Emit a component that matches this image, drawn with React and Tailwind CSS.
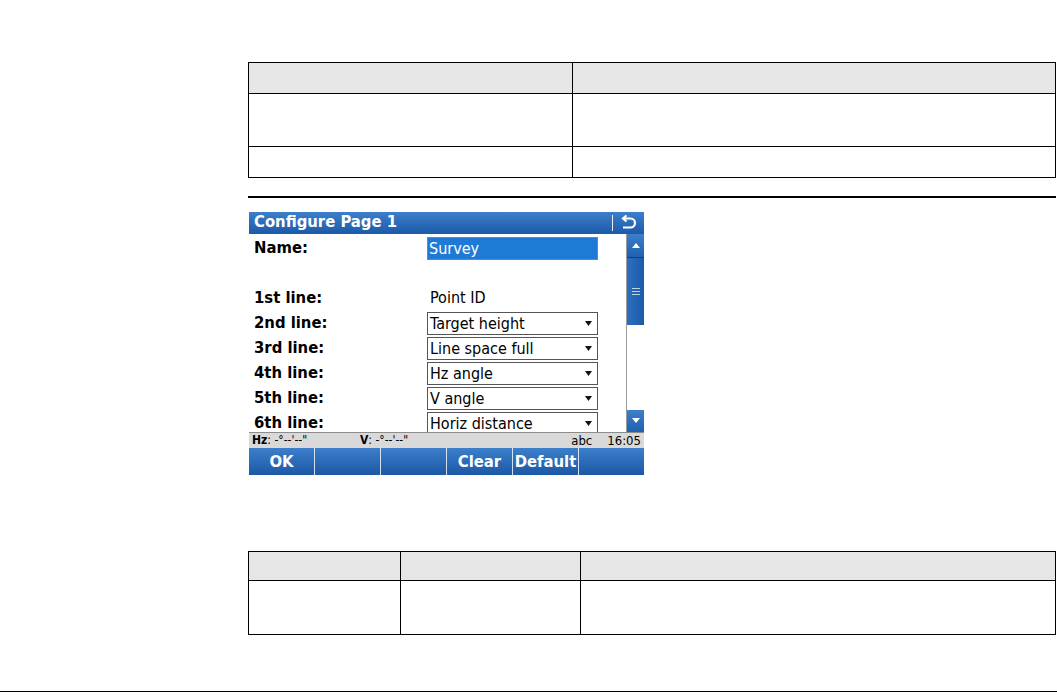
import React from 'react';

const deviceFont = { fontFamily: '"DejaVu Sans Condensed", "DejaVu Sans", sans-serif' };

function Caret() {
  return (
    <svg width="7" height="5" viewBox="0 0 7 5" className="shrink-0">
      <path d="M0 0 H7 L3.5 5 Z" fill="#111" />
    </svg>
  );
}

function Dropdown({ value }) {
  return (
    <div className="w-[171px] h-[23px] border border-[#555] bg-white flex items-center justify-between pl-[2px] pr-[5px] text-[16px] text-black leading-none">
      <span className="pt-[1px]">{value}</span>
      <Caret />
    </div>
  );
}

function Row({ label, children }) {
  return (
    <div className="flex items-center h-[25px]">
      <div className="w-[173px] font-bold text-[16.5px] text-black leading-none pt-[1px]">{label}</div>
      {children}
    </div>
  );
}

function Device() {
  const lines = [
    ['2nd line:', 'Target height'],
    ['3rd line:', 'Line space full'],
    ['4th line:', 'Hz angle'],
    ['5th line:', 'V angle'],
    ['6th line:', 'Horiz distance'],
  ];
  const keys = ['OK', '', '', 'Clear', 'Default', ''];

  return (
    <div className="w-[395px] h-[263px] ml-[1px] flex flex-col select-none" style={deviceFont}>
      {/* Title bar */}
      <div className="h-[22px] flex items-center bg-gradient-to-b from-[#3c7fcb] to-[#1b5aa8] text-white">
        <span className="flex-1 pl-[5px] font-bold text-[16.5px] leading-none">Configure Page 1</span>
        <div className="w-px h-[16px] bg-white/90" />
        <div className="w-[31px] flex justify-center">
          <svg width="17" height="15" viewBox="0 0 17 15" fill="none" stroke="white" strokeWidth="2.2">
            <path d="M3 3.5 H10.5 A4.5 4.5 0 0 1 10.5 12.5 H3" />
            <path d="M6.5 0.5 L3 3.5 L6.5 6.5" />
          </svg>
        </div>
      </div>

      {/* Content */}
      <div className="flex h-[198px]">
        <div className="flex-1 bg-white border-r border-[#9a9a9a] pl-[5px] pt-[2px]">
          <Row label="Name:">
            <div className="w-[171px] h-[23px] border border-[#6d86a3] bg-[#1f7ad6] text-white text-[16px] leading-none flex items-center pl-[1px] pt-[1px]">Survey</div>
          </Row>
          <div className="h-[25px]" />
          <Row label="1st line:">
            <span className="text-[16px] text-black leading-none pl-[3px]">Point ID</span>
          </Row>
          {lines.map(([l, v]) => (
            <Row key={l} label={l}>
              <Dropdown value={v} />
            </Row>
          ))}
        </div>
        <div className="w-[17px] flex flex-col bg-white">
          <div className="h-[24px] bg-gradient-to-b from-[#3c7fcb] to-[#1f60b0] flex items-center justify-center border-b border-[#17406f]">
            <svg width="8" height="5" viewBox="0 0 8 5"><path d="M0 5 H8 L4 0 Z" fill="white" /></svg>
          </div>
          <div className="h-[67px] bg-gradient-to-r from-[#2d6fc0] to-[#1b5aa8] flex items-center justify-center">
            <div className="flex flex-col gap-[2px]">
              <div className="w-[8px] h-px bg-white/70" />
              <div className="w-[8px] h-px bg-white/70" />
              <div className="w-[8px] h-px bg-white/70" />
            </div>
          </div>
          <div className="flex-1" />
          <div className="h-[22px] bg-gradient-to-b from-[#3c7fcb] to-[#1f60b0] flex items-center justify-center">
            <svg width="8" height="5" viewBox="0 0 8 5"><path d="M0 0 H8 L4 5 Z" fill="white" /></svg>
          </div>
        </div>
      </div>

      {/* Status bar */}
      <div className="h-[16px] bg-[#d9d9d9] border-t border-[#8c8c8c] flex items-center text-[12px] text-black leading-none pl-[3px] pr-[3px]">
        <span className="w-[108px]"><b>Hz</b>: -°--'--"</span>
        <span className="flex-1"><b>V</b>: -°--'--"</span>
        <span className="text-[13px] mr-[15px]">abc</span>
        <span className="text-[13px]">16:05</span>
      </div>

      {/* Softkeys */}
      <div className="flex-1 flex bg-gradient-to-b from-[#3c7fcb] to-[#1b58a6]">
        {keys.map((k, i) => (
          <div
            key={i}
            className={`flex-1 flex items-center justify-center text-white font-bold text-[16.5px] leading-none pt-[2px] ${i < 5 ? 'border-r border-white/80' : ''}`}
          >
            {k}
          </div>
        ))}
      </div>
    </div>
  );
}

export default function App() {
  return (
    <div className="w-[1057px] h-[698px] bg-white flex flex-col overflow-hidden">
      <div className="pl-[248px] pt-[62px] w-[1056px]">
        {/* Table 1 */}
        <div className="grid grid-cols-[324px_1fr] border-[1.5px] border-black">
          <div className="h-[31px] bg-[#e6e6e6] border-r-[1.5px] border-b-[1.5px] border-black" />
          <div className="h-[31px] bg-[#e6e6e6] border-b-[1.5px] border-black" />
          <div className="h-[53px] border-r-[1.5px] border-b-[1.5px] border-black" />
          <div className="h-[53px] border-b-[1.5px] border-black" />
          <div className="h-[30px] border-r-[1.5px] border-black" />
          <div className="h-[30px]" />
        </div>

        <div className="mt-[18px] h-[1.5px] bg-black" />

        <div className="mt-[14px]">
          <Device />
        </div>

        {/* Table 2 */}
        <div className="mt-[76px] grid grid-cols-[152px_180px_1fr] border-[1.5px] border-black">
          <div className="h-[29px] bg-[#e6e6e6] border-r-[1.5px] border-b-[1.5px] border-black" />
          <div className="h-[29px] bg-[#e6e6e6] border-r-[1.5px] border-b-[1.5px] border-black" />
          <div className="h-[29px] bg-[#e6e6e6] border-b-[1.5px] border-black" />
          <div className="h-[53px] border-r-[1.5px] border-black" />
          <div className="h-[53px] border-r-[1.5px] border-black" />
          <div className="h-[53px]" />
        </div>
      </div>
      <div className="mt-[56px] h-[1.5px] bg-black w-full" />
    </div>
  );
}
